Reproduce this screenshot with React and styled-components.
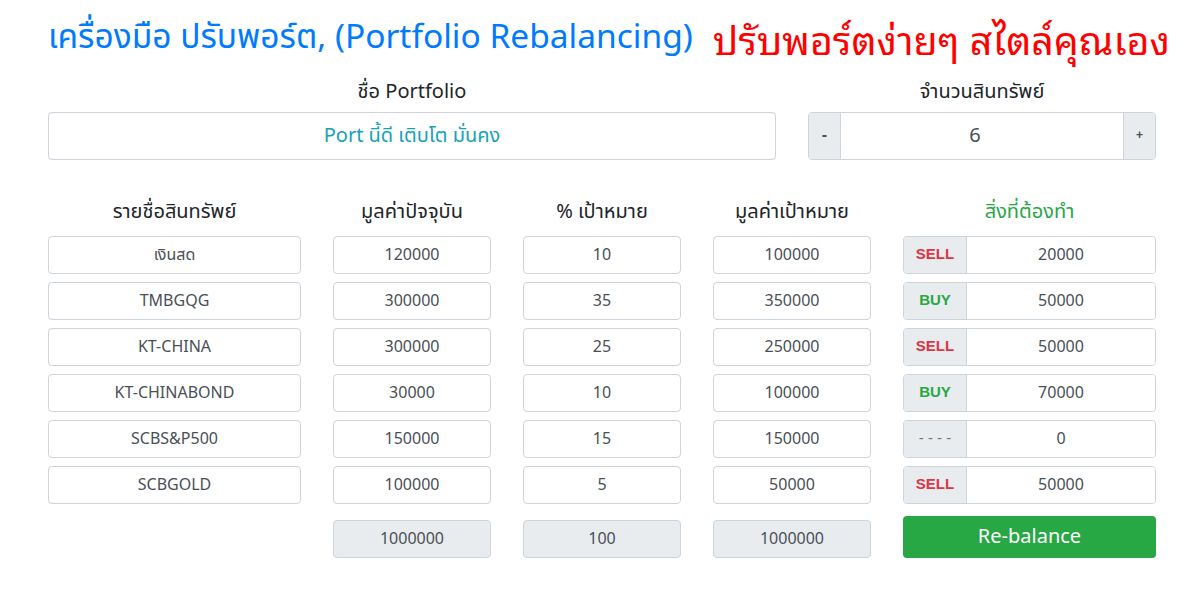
import React from "react";
import styled, { createGlobalStyle } from "styled-components";

const Global = createGlobalStyle`
  html, body { margin: 0; padding: 0; background: #fff; }
  body { font-family: "Noto Sans Thai", "Noto Sans", "DejaVu Sans", sans-serif; color: #212529; }
  * { box-sizing: border-box; }
`;

const Container = styled.div`
  width: 1140px;
  margin-left: 32px;
  padding-top: 14px;
`;

const Row = styled.div`
  display: grid;
  grid-template-columns: ${(p) => p.$cols};
  margin-bottom: ${(p) => p.$mb || 0}px;
  align-items: start;
`;

const Column = styled.div`
  display: flex;
  flex-direction: column;
  min-width: 0;
  padding: 0 16px;
`;

const Title = styled.h1`
  margin: 0;
  font-size: ${(p) => p.$fs}px;
  font-weight: 400;
  line-height: 48px;
  white-space: nowrap;
  color: ${(p) => p.$color};
  font-family: ${(p) => p.$font || "inherit"};
`;

const Label = styled.div`
  text-align: center;
  font-size: 20px;
  line-height: 28px;
  margin-bottom: ${(p) => p.$mb || 6}px;
  color: ${(p) => p.$color || "#212529"};
`;

const Field = styled.div`
  height: ${(p) => (p.$lg ? 48 : 38)}px;
  border: 1px solid #ced4da;
  border-radius: 4px;
  background: ${(p) => (p.$muted ? "#e9ecef" : "#fff")};
  display: flex;
  align-items: center;
  justify-content: center;
  font-size: ${(p) => (p.$lg ? 20 : 16)}px;
  color: ${(p) => p.$color || "#495057"};
  margin-bottom: 8px;
  margin-top: ${(p) => (p.$total ? 8 : 0)}px;
`;

const Group = styled.div`
  display: flex;
  height: ${(p) => (p.$lg ? 48 : 38)}px;
  border: 1px solid #ced4da;
  border-radius: 4px;
  overflow: hidden;
  margin-bottom: 8px;
`;

const Addon = styled.div`
  width: ${(p) => p.$w}px;
  flex: none;
  background: #e9ecef;
  display: flex;
  align-items: center;
  justify-content: center;
  line-height: 1;
  padding-bottom: 3px;
  font-family: "Liberation Sans", "DejaVu Sans", sans-serif;
  font-weight: ${(p) => (p.$bold ? 700 : 400)};
  font-size: ${(p) => p.$fs || 15}px;
  color: ${(p) => p.$color || "#495057"};
  border-${(p) => p.$side}: 1px solid #ced4da;
`;

const GroupValue = styled.div`
  flex: 1;
  display: flex;
  align-items: center;
  justify-content: center;
  padding-right: ${(p) => (p.$lg ? 14 : 0)}px;
  font-size: ${(p) => (p.$lg ? 20 : 16)}px;
  color: #495057;
  background: #fff;
`;

const Button = styled.button`
  height: 42px;
  border: none;
  border-radius: 4px;
  background: #28a745;
  color: #fff;
  font-family: inherit;
  font-size: 20px;
  cursor: pointer;
  margin-top: 4px;
  margin-bottom: 8px;
`;

const assets = [
  ["เงินสด", 120000, 10, 100000, "SELL", 20000],
  ["TMBGQG", 300000, 35, 350000, "BUY", 50000],
  ["KT-CHINA", 300000, 25, 250000, "SELL", 50000],
  ["KT-CHINABOND", 30000, 10, 100000, "BUY", 70000],
  ["SCBS&P500", 150000, 15, 150000, "----", 0],
  ["SCBGOLD", 100000, 5, 50000, "SELL", 50000],
];

const actionColor = { SELL: "#dc3545", BUY: "#28a745", "----": "#6c757d" };

export default function App() {
  return (
    <>
      <Global />
      <Container>
        <Row $cols="7fr 5fr" $mb={16}>
          <Column>
            <Title $color="#007bff" $fs={33.5}>เครื่องมือ ปรับพอร์ต, (Portfolio Rebalancing)</Title>
          </Column>
          <Column>
            <Title $color="#ff0000" $fs={39.3} $font={'"Noto Sans Thai Looped", "Noto Sans Thai", sans-serif'}>ปรับพอร์ตง่ายๆ สไตล์คุณเอง</Title>
          </Column>
        </Row>
        <Row $cols="8fr 4fr" $mb={30}>
          <Column>
            <Label>ชื่อ Portfolio</Label>
            <Field $lg $color="#17a2b8">Port นี้ดี เติบโต มั่นคง</Field>
          </Column>
          <Column>
            <Label>จำนวนสินทรัพย์</Label>
            <Group $lg>
              <Addon $w={32} $side="right" $fs={16} $bold>-</Addon>
              <GroupValue $lg>6</GroupValue>
              <Addon $w={32} $side="left" $fs={12} $bold>+</Addon>
            </Group>
          </Column>
        </Row>
        <Row $cols="3fr 2fr 2fr 2fr 3fr">
          <Column>
            <Label $mb={10}>รายชื่อสินทรัพย์</Label>
            {assets.map((a) => (
              <Field key={a[0]}>{a[0]}</Field>
            ))}
          </Column>
          <Column>
            <Label $mb={10}>มูลค่าปัจจุบัน</Label>
            {assets.map((a) => (
              <Field key={a[0]}>{a[1]}</Field>
            ))}
            <Field $muted $total>1000000</Field>
          </Column>
          <Column>
            <Label $mb={10}>% เป้าหมาย</Label>
            {assets.map((a) => (
              <Field key={a[0]}>{a[2]}</Field>
            ))}
            <Field $muted $total>100</Field>
          </Column>
          <Column>
            <Label $mb={10}>มูลค่าเป้าหมาย</Label>
            {assets.map((a) => (
              <Field key={a[0]}>{a[3]}</Field>
            ))}
            <Field $muted $total>1000000</Field>
          </Column>
          <Column>
            <Label $mb={10} $color="#28a745">สิ่งที่ต้องทำ</Label>
            {assets.map((a) => (
              <Group key={a[0]}>
                <Addon $w={63} $side="right" $bold={a[4] !== "----"} $color={actionColor[a[4]]}>
                  {a[4] === "----" ? "- - - -" : a[4]}
                </Addon>
                <GroupValue>{a[5]}</GroupValue>
              </Group>
            ))}
            <Button>Re-balance</Button>
          </Column>
        </Row>
      </Container>
    </>
  );
}
